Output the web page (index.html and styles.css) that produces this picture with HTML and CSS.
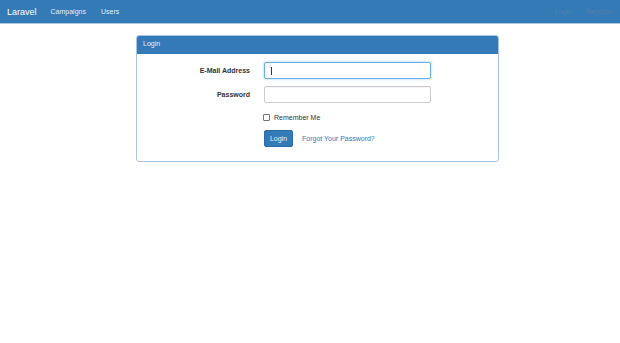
FILE: index.html
```html
<!DOCTYPE html>
<html>
<head>
<meta charset="utf-8">
<link rel="stylesheet" href="styles.css">
</head>
<body>
<nav class="navbar">
  <div class="nav-left">
    <span class="brand">Laravel</span>
    <a class="nav-link">Campaigns</a>
    <a class="nav-link">Users</a>
  </div>
  <div class="nav-right">
    <a class="nav-link dim">Login</a>
    <a class="nav-link dim">Register</a>
  </div>
</nav>
<main class="page">
  <section class="panel">
    <div class="panel-heading">Login</div>
    <form class="panel-body">
      <div class="row">
        <label class="label">E-Mail Address</label>
        <div class="input focus"><span class="caret"></span></div>
      </div>
      <div class="row">
        <label class="label">Password</label>
        <div class="input"></div>
      </div>
      <div class="row check-row">
        <span class="label"></span>
        <div class="check"><span class="box"></span><span>Remember Me</span></div>
      </div>
      <div class="row btn-row">
        <span class="label"></span>
        <div class="actions"><span class="btn">Login</span><a class="link">Forgot Your Password?</a></div>
      </div>
    </form>
  </section>
</main>
</body>
</html>
```
FILE: styles.css
```css
html, body { margin: 0; padding: 0; background: #fff; }
body { font-family: "Liberation Sans", Arial, sans-serif; font-size: 7px; color: #333; }
.navbar {
  height: 23px;
  background: #337ab7;
  border-bottom: 1px solid #a9c6e2;
  display: flex;
  justify-content: space-between;
  align-items: center;
}
.nav-left, .nav-right { display: flex; align-items: center; }
.brand { color: #fff; font-size: 9px; margin-left: 7px; margin-right: 14px; }
.nav-link { color: #e6eef6; margin-right: 15px; font-size: 7px; }
.nav-left .nav-link:last-child { margin-right: 0; }
.nav-link.dim { color: #5a7ea1; }
.nav-right .nav-link.dim:first-child { margin-right: 14px; }
.nav-right .nav-link.dim:last-child { margin-right: 8px; }
.page { padding-top: 11px; padding-left: 136px; }
.panel {
  width: 361px;
  border: 1px solid #a7c6e5;
  border-radius: 3px;
  overflow: hidden;
}
.panel-heading {
  background: #337ab7;
  color: #e8f0f7;
  height: 19px;
  line-height: 18px;
  padding-left: 7px;
  margin-top: -1px;
  margin-left: -1px;
  margin-right: -1px;
  border-top-left-radius: 3px;
  border-top-right-radius: 3px;
}
.panel-body { padding: 8px 0 14px 0; display: flex; flex-direction: column; gap: 7px; }
.row { display: flex; align-items: center; }
.label { width: 127px; text-align: right; font-weight: bold; padding-right: 14px; box-sizing: border-box; flex: none; }
.input {
  width: 167px; height: 17px; box-sizing: border-box;
  border: 1px solid #ccc; border-radius: 2px; background: #fff;
  display: flex; align-items: center;
  box-shadow: inset 0 1px 1px rgba(0,0,0,0.05);
}
.input.focus { border-color: #66afe9; box-shadow: 0 0 3px rgba(102,175,233,0.6); }
.caret { width: 1px; height: 8px; background: #333; margin-left: 6px; }
.check-row { margin-top: 4px; }
.check { display: flex; align-items: center; gap: 4px; margin-left: -1px; }
.box { width: 5px; height: 5px; border: 1px solid #767676; border-radius: 1px; background: #fff; }
.btn-row { margin-top: 2px; }
.actions { display: flex; align-items: center; gap: 9px; }
.btn {
  background: #337ab7; color: #e8f0f7; border: 1px solid #2e6da4; border-radius: 2px;
  height: 17px; width: 29px; box-sizing: border-box; line-height: 15px; display: inline-block; text-align: center;
}
.link { color: #337ab7; }
```
